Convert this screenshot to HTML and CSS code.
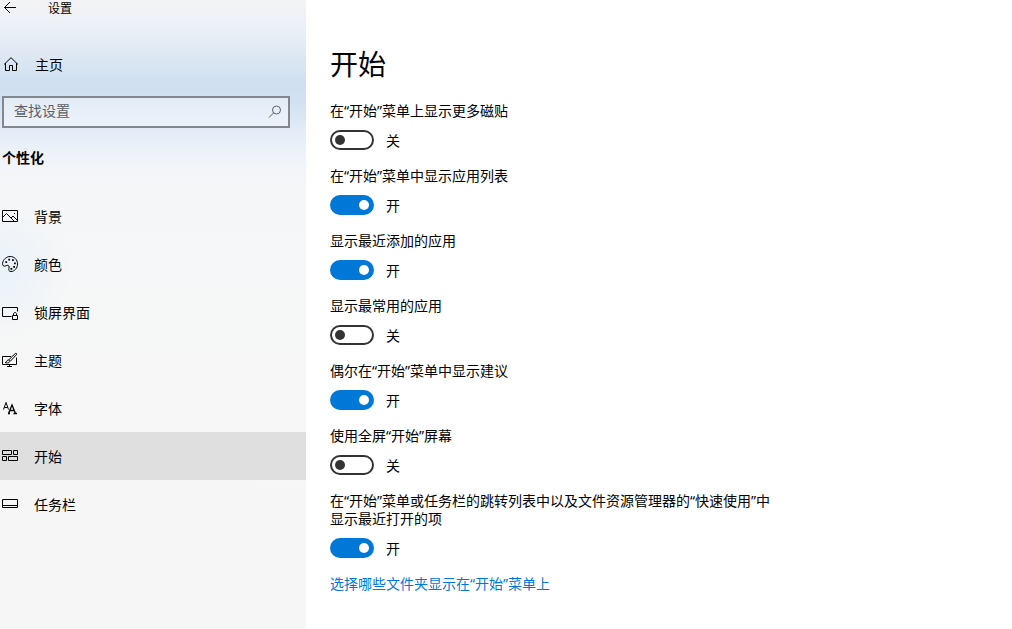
FILE: index.html
```html
<!DOCTYPE html>
<html lang="zh-CN">
<head>
<meta charset="utf-8">
<meta name="viewport" content="width=device-width, initial-scale=1">
<title>设置</title>
<link rel="stylesheet" href="styles.css">
</head>
<body>
<div class="app">
  <aside class="sidebar">
    <header class="titlebar">
      <button class="back" type="button" aria-label="返回">
        <svg class="icon" viewBox="0 0 16 16"><path d="M14 7.500H2.500M8 2 2.500 7.500 8 13"/></svg>
      </button>
      <span class="app-name">设置</span>
    </header>
    <a class="home" href="#">
      <svg class="icon" viewBox="0 0 16 16"><path d="M1 7.500 8 .7l7 6.800M2.500 6.200v7.300h4V8.500h3v5h4V6.200"/></svg>
      <span>主页</span>
    </a>
    <div class="search">
      <input class="search-input" type="text" placeholder="查找设置" aria-label="查找设置">
      <svg class="icon search-icon" viewBox="0 0 16 16"><circle cx="9.5" cy="6" r="4"/><path d="M6.6 8.9 2 13.5"/></svg>
    </div>
    <h2 class="category">个性化</h2>
    <nav class="nav">
      <a class="nav-item" href="#">
        <svg class="icon" viewBox="0 0 16 16"><path d="M.5 2.500h15v11H.5zM.5 9.500l4-4 8 8M9 10l2-2 4.500 4.500"/><path class="solid" d="M12 5h1v1h-1z"/></svg>
        <span>背景</span>
      </a>
      <a class="nav-item" href="#">
        <svg class="icon" viewBox="0 0 16 16"><path d="M.6 7.2C1.2 3.2 4.500.5 8.200.5c4.200 0 7.300 3.300 7.300 7.400 0 4.300-3 7.600-6.500 7.600-2 0-2.600-1.500-2.100-3.100.6-1.900-.1-3.400-1.700-3.100-1.500.4-2.700 1.500-3.800.6C.7 9.300.5 8.300.6 7.200z"/><path class="solid" d="M3.300 5.300h1.800v1.800H3.300zM6.300 2.700h1.800v1.800H6.300zM10 3.200h1.800V5H10zM12 6.500h1.800v1.800H12zM11.200 10h1.800v1.800h-1.800zM8.500 12h1.800v1.800H8.500z"/></svg>
        <span>颜色</span>
      </a>
      <a class="nav-item" href="#">
        <svg class="icon" viewBox="0 0 16 16"><path d="M9.500 12.500H.5v-9h15v4M10.500 11.500h5v4h-5zM11.500 11.500V10c0-2 3-2 3 0v1.500"/></svg>
        <span>锁屏界面</span>
      </a>
      <a class="nav-item" href="#">
        <svg class="icon" viewBox="0 0 16 16"><path d="M9 4.500H.5v8h14V5.500M7.500 12.500v2M5 14.500h5M3 10.500c1.800 0 1.500-2 3-2.500s2.200.7 1.700 1.700C7 11.200 4.500 11.200 3 10.500zM6.800 7.800 13.300 1.500c1-.7 1.900.3 1.200 1.200L8.500 9"/></svg>
        <span>主题</span>
      </a>
      <a class="nav-item" href="#">
        <svg class="icon" viewBox="0 0 16 16"><path d="M1.500 9.500 4 2.500l2.500 7M2.400 7.500h3.200"/><path class="bold" d="m6.700 13 3.300-8 3.300 8M8 10.500h4M6 13.500h2M11.500 13.500H15"/></svg>
        <span>字体</span>
      </a>
      <a class="nav-item is-current" href="#" aria-current="page">
        <svg class="icon" viewBox="0 0 16 16"><path d="M.5 2.500h9v4h-9zM11.500 2.500h4v4h-4zM.5 8.500h4v4h-4zM6.500 8.500h9v4h-9z"/></svg>
        <span>开始</span>
      </a>
      <a class="nav-item" href="#">
        <svg class="icon" viewBox="0 0 16 16"><path d="M.5 3.500h15v8H.5zM.5 9.500h15"/></svg>
        <span>任务栏</span>
      </a>
    </nav>
  </aside>

  <main class="content">
    <h1 class="title">开始</h1>
    <div class="settings">
      <div class="setting">
        <label for="tiles">在“开始”菜单上显示更多磁贴</label>
        <div class="control"><input class="toggle" id="tiles" type="checkbox"><span>关</span></div>
      </div>
      <div class="setting">
        <label for="app-list">在“开始”菜单中显示应用列表</label>
        <div class="control"><input class="toggle" id="app-list" type="checkbox" checked><span>开</span></div>
      </div>
      <div class="setting">
        <label for="recent-apps">显示最近添加的应用</label>
        <div class="control"><input class="toggle" id="recent-apps" type="checkbox" checked><span>开</span></div>
      </div>
      <div class="setting">
        <label for="most-used">显示最常用的应用</label>
        <div class="control"><input class="toggle" id="most-used" type="checkbox"><span>关</span></div>
      </div>
      <div class="setting">
        <label for="suggestions">偶尔在“开始”菜单中显示建议</label>
        <div class="control"><input class="toggle" id="suggestions" type="checkbox" checked><span>开</span></div>
      </div>
      <div class="setting">
        <label for="full-screen">使用全屏“开始”屏幕</label>
        <div class="control"><input class="toggle" id="full-screen" type="checkbox"><span>关</span></div>
      </div>
      <div class="setting">
        <label for="recent-items">在“开始”菜单或任务栏的跳转列表中以及文件资源管理器的“快速使用”中显示最近打开的项</label>
        <div class="control"><input class="toggle" id="recent-items" type="checkbox" checked><span>开</span></div>
      </div>
      <a class="link" href="#">选择哪些文件夹显示在“开始”菜单上</a>
    </div>
  </main>
</div>
</body>
</html>
```
FILE: styles.css
```css
* {
  box-sizing: border-box;
}

body {
  margin: 0;
  background: #fff;
  color: #000;
  font: 14px/18px "Noto Sans", "Noto Sans CJK SC", sans-serif;
}

a {
  color: inherit;
  text-decoration: none;
}

.app {
  display: grid;
  grid-template-columns: 306px 1fr;
  min-height: 100vh;
}

.sidebar {
  background:
    radial-gradient(circle at 0 270px, rgba(225, 238, 252, 0.6), rgba(225, 238, 252, 0) 70px),
    linear-gradient(#f3f3f4 0, #ebf0f7 30px, #dce7f3 58px, #cfdff0 84px, #d3e2f2 104px, #e4ecf7 132px, #eff3f9 156px, #f5f6f8 184px, #f6f7f7 300px, #f6f6f6);
}

.icon {
  width: 16px;
  height: 16px;
  flex: none;
  fill: none;
  stroke: #000;
  stroke-width: 1;
}

.icon .solid {
  fill: #000;
  stroke: none;
}

.icon .bold {
  stroke-width: 1.3;
}

.titlebar {
  display: flex;
  align-items: center;
  gap: 30px;
  height: 16px;
  padding-left: 2px;
  font-size: 12px;
}

.back {
  display: flex;
  padding: 0;
  border: 0;
  background: none;
}

.home {
  display: flex;
  align-items: center;
  gap: 16px;
  height: 48px;
  margin-top: 24px;
  padding: 2px 3px 0;
}

.search {
  position: relative;
  margin: 8px 16px 0 2px;
}

.search-input {
  display: block;
  width: 100%;
  height: 32px;
  padding: 0 36px 4px 10px;
  border: 2px solid #83878e;
  border-radius: 0;
  background: rgba(255, 255, 255, 0.4);
  font: inherit;
}

.search-input::placeholder {
  color: #5c6066;
  opacity: 1;
}

.search-icon {
  position: absolute;
  top: 8px;
  right: 7px;
  stroke: #5c6066;
}

.category {
  margin: 21px 0 0 2px;
  font-size: 14px;
  line-height: 18px;
  font-weight: 700;
}

.nav {
  margin-top: 25px;
}

.nav-item {
  display: flex;
  align-items: center;
  gap: 16px;
  height: 48px;
  padding-left: 2px;
}

.titlebar span,
.nav-item span,
.control span {
  padding-top: 2px;
}

.is-current {
  background: #dfdfdf;
}

.content {
  padding: 44px 24px 24px;
}

.title {
  margin: 0;
  font-size: 28px;
  line-height: 40px;
  font-weight: 400;
}

.settings {
  display: flex;
  flex-direction: column;
  align-items: flex-start;
  gap: 17px;
  max-width: 446px;
  margin-top: 18px;
}

.setting {
  display: flex;
  flex-direction: column;
  gap: 10px;
}

.control {
  display: flex;
  align-items: center;
  gap: 12px;
  height: 20px;
}

.toggle {
  appearance: none;
  display: flex;
  align-items: center;
  width: 44px;
  height: 20px;
  margin: 0;
  padding: 0 3px;
  border: 2px solid #333;
  border-radius: 10px;
}

.toggle::before {
  content: "";
  width: 10px;
  height: 10px;
  border-radius: 50%;
  background: #333;
}

.toggle:checked {
  justify-content: flex-end;
  border-color: #0078d7;
  background: #0078d7;
}

.toggle:checked::before {
  background: #fff;
}

.link {
  color: #0078d7;
}
```
